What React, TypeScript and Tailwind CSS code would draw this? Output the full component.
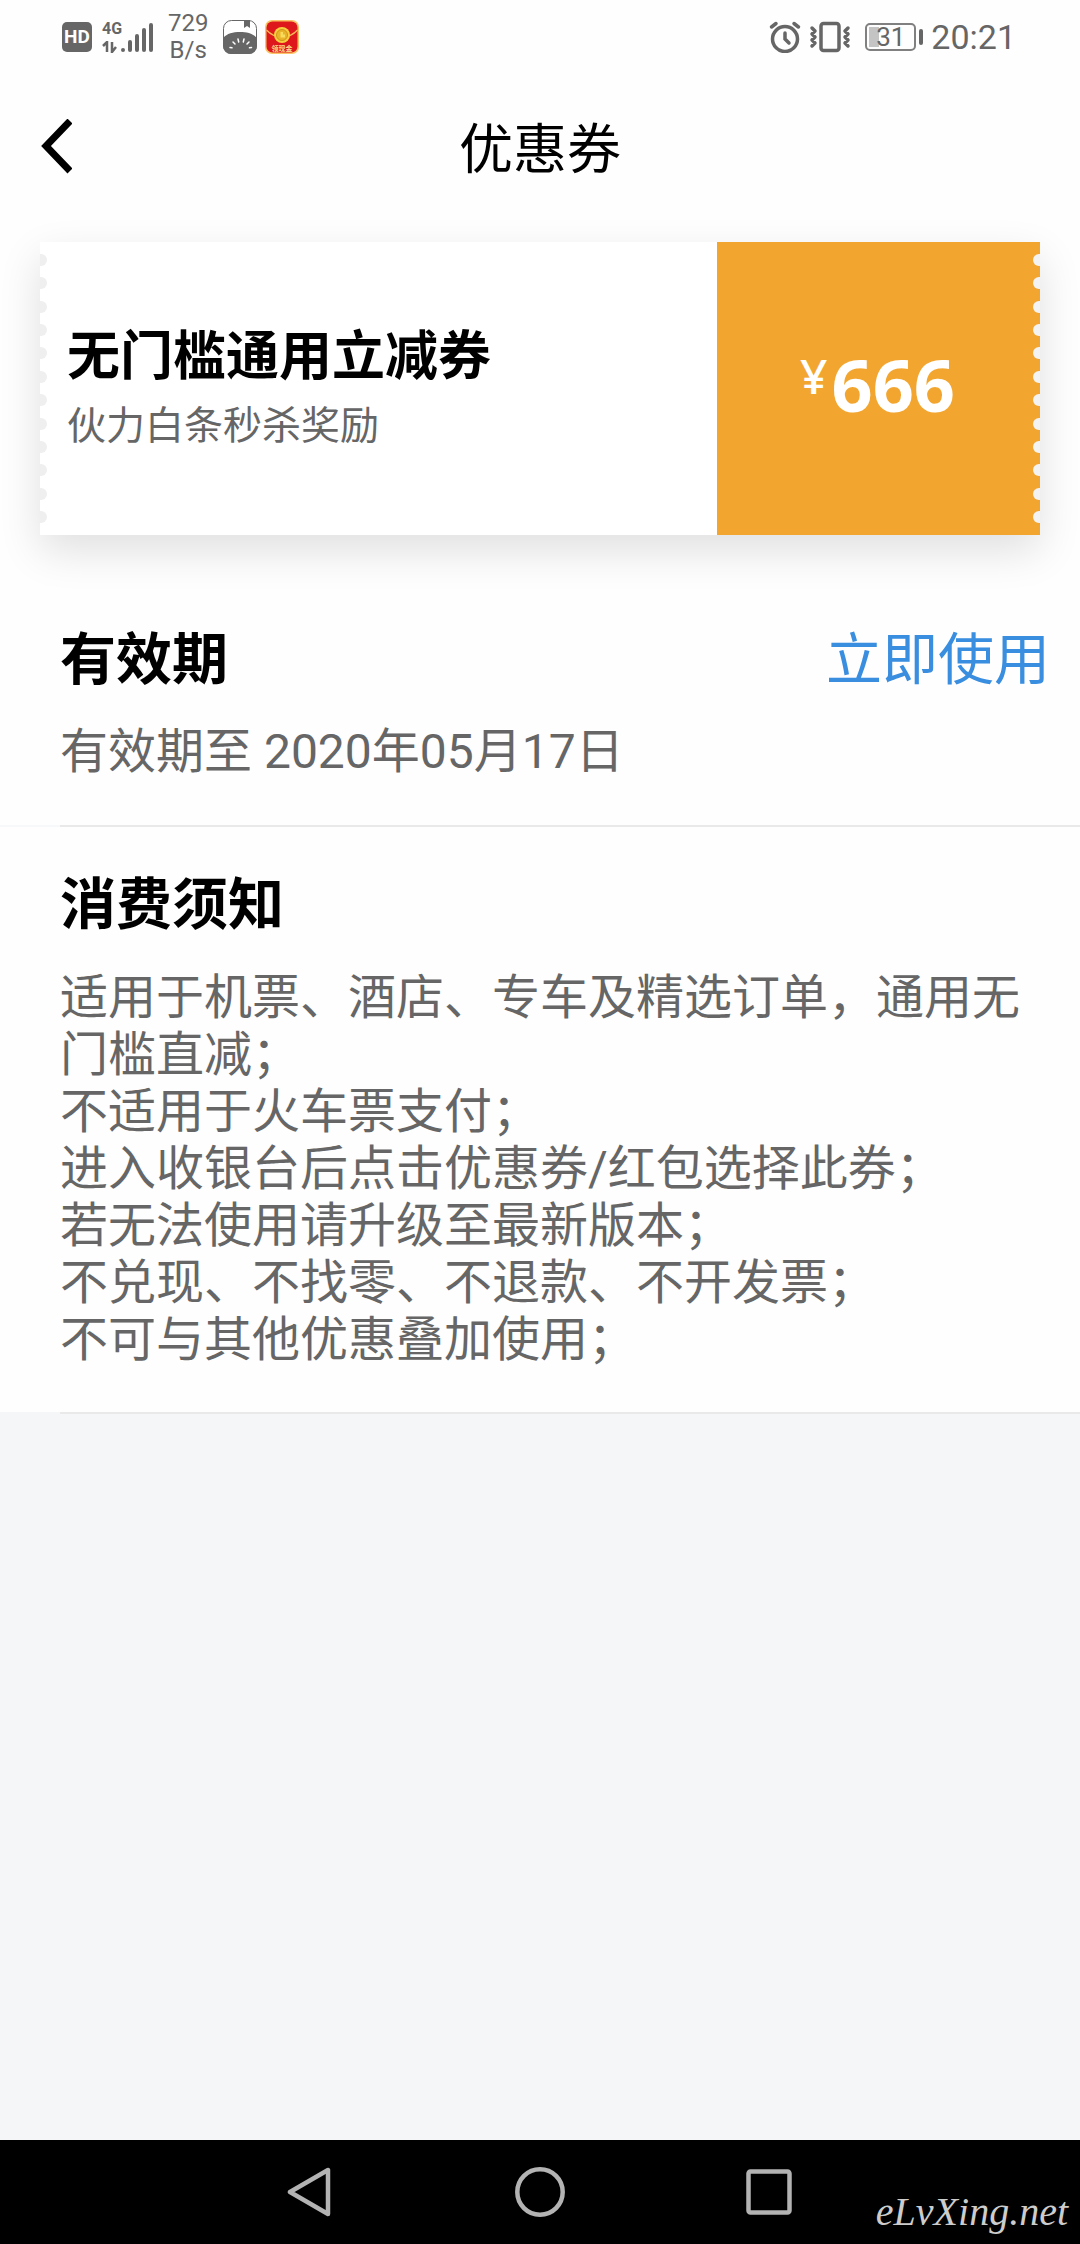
const notches = Array.from({ length: 12 }, (_, i) => i)

const rules = [
  "适用于机票、酒店、专车及精选订单，通用无门槛直减；",
  "不适用于火车票支付；",
  "进入收银台后点击优惠券/红包选择此券；",
  "若无法使用请升级至最新版本；",
  "不兑现、不找零、不退款、不开发票；",
  "不可与其他优惠叠加使用；",
]

function SignalIcon() {
  return (
    <div className="flex h-8 items-end">
      <div className="flex h-full w-[18px] flex-col justify-between">
        <span className="text-[16px] font-bold leading-[16px]">4G</span>
        <svg className="h-3 w-4" viewBox="0 0 16 12" fill="none" stroke="currentColor" strokeWidth="2.5">
          <path d="M1 5l4-4v10M10 1v10l4-5" />
        </svg>
      </div>
      <svg className="h-8 w-[34px]" viewBox="0 0 34 32" fill="none" stroke="currentColor" strokeWidth="4" strokeLinecap="round">
        <path d="M3 29v0M10 29v-8M17 29V15M24 29V9M31 29V4" />
      </svg>
    </div>
  )
}

function MelonIcon() {
  return (
    <svg className="size-9" viewBox="0 0 36 36">
      <rect x="1.5" y="1.5" width="33" height="33" rx="8" fill="#fff" stroke="#666" strokeWidth="1" />
      <path d="M22 1h6v8l-3-2-3 2z" fill="#666" />
      <path d="M1 19C5 14.5 11 13 18 13s13 1.5 17 6v8a8 8 0 0 1-8 8H9a8 8 0 0 1-8-8z" fill="#666" />
      <path d="M8 28.5l2 .3M11 23l2 2M16 20l.7 3M22 20l-.7 3M27 23l-2 2M29.500 28.500l-2 .3" stroke="#fff" strokeWidth="1.5" strokeLinecap="round" />
    </svg>
  )
}

function RedPacketIcon() {
  return (
    <svg className="size-9" viewBox="0 0 36 36">
      <rect x="1" y="1" width="34" height="34" rx="7" fill="#f9c566" />
      <rect x="2.5" y="2.5" width="31" height="31" rx="6" fill="#dd171b" />
      <path d="M2.5 11C7 16 12 18 18 18s11-2 15.500-7" fill="none" stroke="#f7b85a" strokeWidth="1.2" />
      <circle cx="18" cy="16" r="8" fill="#f7cf3e" />
      <circle cx="18" cy="16" r="5.5" fill="#e9b32a" stroke="#d1961c" strokeWidth="1" />
      <path d="M16.500 13h2.500v2.500h2v3h-4.500z" fill="#f9dc5c" />
      <text x="18" y="32" textAnchor="middle" fontSize="7" fontWeight="700" fill="#fbd98a">领现金</text>
    </svg>
  )
}

function AlarmIcon() {
  return (
    <svg className="size-8" viewBox="0 0 32 32" fill="none" stroke="currentColor" strokeWidth="3.5" strokeLinecap="round">
      <circle cx="16" cy="18" r="12.5" />
      <path d="M2.5 6L7 2.5M29.5 6L25 2.5M16 12v6l4 4" />
    </svg>
  )
}

function VibrateIcon() {
  return (
    <svg className="h-8 w-[42px]" viewBox="0 0 42 32" fill="none" stroke="currentColor" strokeWidth="3.5" strokeLinecap="round" strokeLinejoin="round">
      <rect x="12" y="2.5" width="18" height="27" rx="2.5" />
      <path d="M3 7l3 3-3 3 3 3-3 3 3 3-3 3M39 7l-3 3 3 3-3 3 3 3-3 3 3 3" />
    </svg>
  )
}

function StatusBar() {
  return (
    <div className="flex h-[74px] items-center justify-between pl-[62px] pr-16 text-[#666]">
      <div className="flex items-center">
        <span className="flex size-[30px] items-center justify-center rounded-[5px] bg-[#666] text-[19px] font-bold text-white">
          HD
        </span>
        <div className="ml-[10px]">
          <SignalIcon />
        </div>
        <div className="ml-[14px] text-center text-[24px] leading-[27px]">
          <div>729</div>
          <div>B/s</div>
        </div>
        <div className="ml-[14px] flex gap-[6px]">
          <MelonIcon />
          <RedPacketIcon />
        </div>
      </div>
      <div className="flex items-center">
        <AlarmIcon />
        <div className="ml-2">
          <VibrateIcon />
        </div>
        <div className="ml-[14px] flex items-center gap-[3px]">
          <div className="relative flex h-7 w-[51px] items-center justify-center rounded-[5px] border-2 border-[#808080]">
            <div className="absolute inset-y-[2px] left-[2px] w-[10px] bg-[#c4c4c4]" />
            <span className="relative text-[26px] leading-none">31</span>
          </div>
          <div className="h-4 w-1 rounded-full bg-[#666]" />
        </div>
        <span className="ml-2 text-[34px] leading-none">20:21</span>
      </div>
    </div>
  )
}

function Header() {
  return (
    <header className="grid h-[146px] grid-cols-[1fr_auto_1fr] items-center px-10">
      <button type="button" aria-label="返回" className="w-8">
        <svg className="h-14 w-8" viewBox="0 0 32 56" fill="none" stroke="#000" strokeWidth="7">
          <path d="M30 2L6 27l24 25" />
        </svg>
      </button>
      <h1 className="pt-2 text-[54px] leading-none">优惠券</h1>
    </header>
  )
}

function Coupon() {
  return (
    <section className="relative mx-10 mt-[22px] flex h-[293px] bg-white shadow-[0_16px_40px_rgba(0,0,0,0.12)]">
      <div className="absolute inset-y-0 left-0 flex flex-col justify-between py-3">
        {notches.map((i) => (
          <span key={i} className="h-3 w-[7px] rounded-r-full bg-[#efefef]" />
        ))}
      </div>
      <div className="flex flex-1 flex-col justify-center pl-[27px] pt-[3px]">
        <h2 className="text-[53px] font-bold leading-[72px]">无门槛通用立减券</h2>
        <p className="text-[39px] leading-[66px] text-[#666]">伙力白条秒杀奖励</p>
      </div>
      <div className="flex w-[323px] items-center justify-center bg-[#f2a630] pb-[10px] pr-[2px] font-['Noto_Sans'] text-white">
        <span className="mb-4 mr-1 text-[48px] font-medium leading-none">¥</span>
        <span className="text-[72px] font-bold leading-none">666</span>
      </div>
      <div className="absolute inset-y-0 right-0 flex flex-col justify-between py-3">
        {notches.map((i) => (
          <span key={i} className="h-3 w-[7px] rounded-l-full bg-[#f3f3f3]" />
        ))}
      </div>
    </section>
  )
}

function NavBar() {
  return (
    <nav className="relative flex h-[104px] items-center justify-center gap-[180px] bg-black">
      <button type="button" aria-label="后退">
        <svg className="size-[50px]" viewBox="0 0 50 50" fill="none" stroke="#b3b3b3" strokeWidth="4.5" strokeLinejoin="round">
          <path d="M43 3v44L5 25z" />
        </svg>
      </button>
      <button type="button" aria-label="主页">
        <svg className="size-[50px]" viewBox="0 0 50 50" fill="none" stroke="#b3b3b3" strokeWidth="4.5">
          <circle cx="25" cy="25" r="22.7" />
        </svg>
      </button>
      <button type="button" aria-label="最近任务">
        <svg className="size-[50px]" viewBox="0 0 50 50" fill="none" stroke="#b3b3b3" strokeWidth="4.5">
          <rect x="3.5" y="4.5" width="41" height="41" rx="2" />
        </svg>
      </button>
      <span className="absolute bottom-3 right-3 font-['Liberation_Serif'] text-[40px] italic leading-none text-[#ccc]">
        eLvXing.net
      </span>
    </nav>
  )
}

export default function App() {
  return (
    <div className="flex min-h-screen flex-col bg-[#f5f6f8] font-[Roboto,'Noto_Sans_CJK_SC',sans-serif] text-black">
      <main className="flex-1">
        <div className="bg-[#fefefe]">
          <StatusBar />
          <Header />
          <Coupon />

          <section className="pt-[85px]">
            <div className="flex items-center justify-between pl-[60px] pr-[30px] text-[56px] leading-[80px]">
              <h2 className="font-bold">有效期</h2>
              <a href="#use" className="text-[#3a8ee0]">立即使用</a>
            </div>
            <p className="px-[60px] pt-4 text-[48px] leading-[72px] text-[#666]">有效期至 2020年05月17日</p>
            <div className="mt-[37px] bg-[#f6f8f9] pl-[60px]">
              <div className="h-[2px] bg-[#e9e9e9]" />
            </div>
          </section>

          <section className="px-[60px] pb-[44px] pt-[38px]">
            <h2 className="text-[56px] font-bold leading-[80px]">消费须知</h2>
            <ul className="pt-6 text-[48px] leading-[57px] text-[#666]">
              {rules.map((rule) => (
                <li key={rule}>{rule}</li>
              ))}
            </ul>
          </section>
        </div>
        <div className="ml-[60px] h-[2px] bg-[#e9e9e9]" />
      </main>
      <NavBar />
    </div>
  )
}
